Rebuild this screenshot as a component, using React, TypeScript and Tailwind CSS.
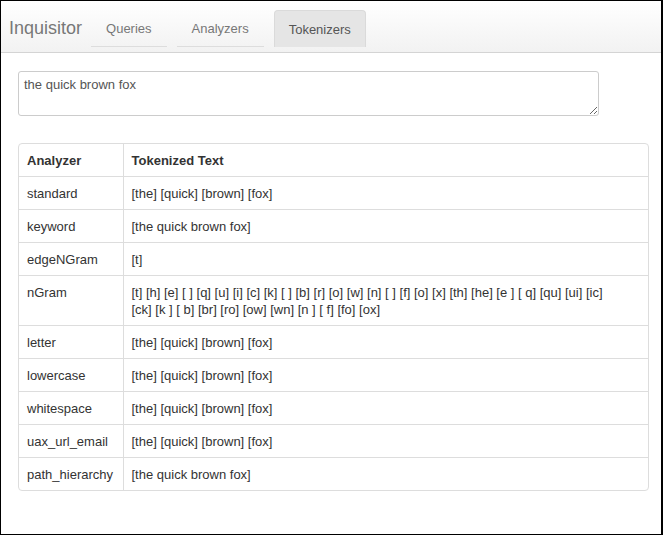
import { useState } from 'react';

interface Row {
  analyzer: string;
  tokens: string;
}

const rows: Row[] = [
  { analyzer: 'standard', tokens: '[the] [quick] [brown] [fox]' },
  { analyzer: 'keyword', tokens: '[the quick brown fox]' },
  { analyzer: 'edgeNGram', tokens: '[t]' },
  {
    analyzer: 'nGram',
    tokens:
      '[t] [h] [e] [ ] [q] [u] [i] [c] [k] [ ] [b] [r] [o] [w] [n] [ ] [f] [o] [x] [th] [he] [e ] [ q] [qu] [ui] [ic] [ck] [k ] [ b] [br] [ro] [ow] [wn] [n ] [ f] [fo] [ox]',
  },
  { analyzer: 'letter', tokens: '[the] [quick] [brown] [fox]' },
  { analyzer: 'lowercase', tokens: '[the] [quick] [brown] [fox]' },
  { analyzer: 'whitespace', tokens: '[the] [quick] [brown] [fox]' },
  { analyzer: 'uax_url_email', tokens: '[the] [quick] [brown] [fox]' },
  { analyzer: 'path_hierarchy', tokens: '[the quick brown fox]' },
];

const tabs = ['Queries', 'Analyzers', 'Tokenizers'];

export default function App() {
  const [text, setText] = useState('the quick brown fox');
  const active = 'Tokenizers';

  return (
    <div
      className="h-[535px] w-[663px] border border-r-2 border-black bg-white text-[13px] text-[#333]"
      style={{ fontFamily: '"Liberation Sans", Arial, sans-serif' }}
    >
      <div className="flex h-[52px] items-end border-b border-[#d4d4d4] bg-gradient-to-b from-white to-[#f2f2f2] pl-[8px]">
        <div className="mb-[13px] mr-[9px] text-[18px] leading-[22px] text-[#777]">
          Inquisitor
        </div>
        <div className="mb-[5px] flex gap-[10px]">
          {tabs.map((tab) =>
            tab === active ? (
              <div
                key={tab}
                className="rounded-t-[4px] border border-b-0 border-[#dadada] bg-[#e5e5e5] px-[14px] pb-[8px] pt-[10px] leading-[18px] text-[#555]"
              >
                {tab}
              </div>
            ) : (
              <div
                key={tab}
                className="border-b border-[#ddd] px-[15px] pb-[8px] pt-[10px] leading-[18px] text-[#777]"
              >
                {tab}
              </div>
            ),
          )}
        </div>
      </div>

      <div className="pl-[17px] pr-[12px] pt-[18px]">
        <textarea
          value={text}
          onChange={(e) => setText(e.target.value)}
          className="block h-[45px] w-[581px] rounded-[3px] border border-[#ccc] px-[5px] py-[4px] text-[13px] leading-[18px] text-[#555] outline-none"
          style={{ fontFamily: '"Liberation Sans", Arial, sans-serif' }}
        />

        <div className="mt-[27px] overflow-hidden rounded-[4px] border border-[#ddd]">
          <table className="w-full border-collapse">
            <thead>
              <tr>
                <th className="w-[104px] px-[8px] pb-[7px] pt-[8px] text-left font-bold leading-[17px]">
                  Analyzer
                </th>
                <th className="border-l border-[#ddd] px-[8px] pb-[7px] pt-[8px] text-left font-bold leading-[17px]">
                  Tokenized Text
                </th>
              </tr>
            </thead>
            <tbody>
              {rows.map((row) => (
                <tr key={row.analyzer} className="border-t border-[#ddd]">
                  <td className="px-[8px] pb-[7px] pt-[8px] align-top leading-[17px]">
                    {row.analyzer}
                  </td>
                  <td className="whitespace-pre-wrap border-l border-[#ddd] pb-[7px] pl-[8px] pr-[30px] pt-[8px] align-top leading-[17px]">
                    {row.tokens}
                  </td>
                </tr>
              ))}
            </tbody>
          </table>
        </div>
      </div>
    </div>
  );
}
